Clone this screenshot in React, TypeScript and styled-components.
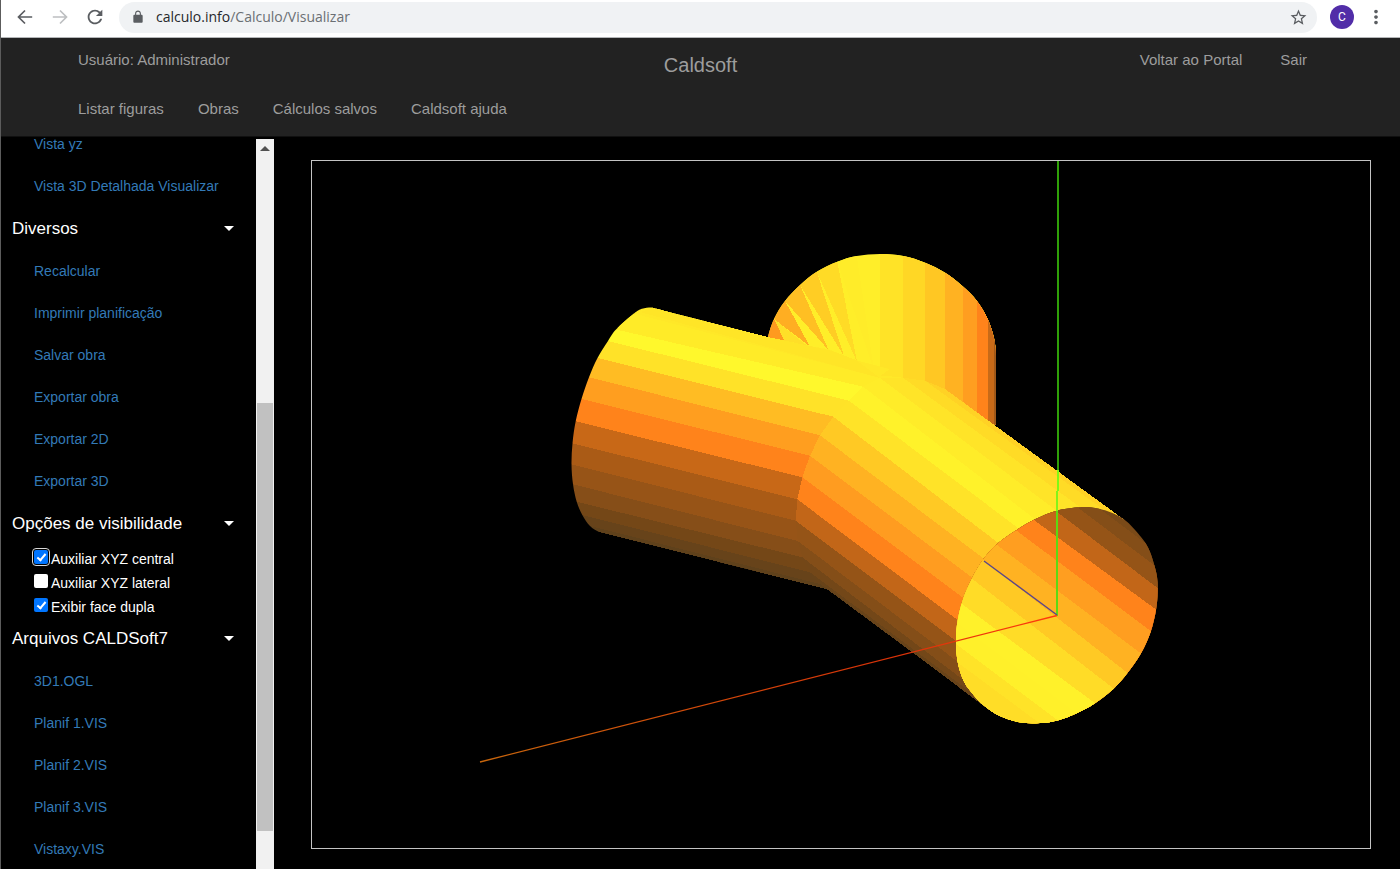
import React, { useState } from "react";
import styled, { createGlobalStyle } from "styled-components";
import { MdMoreVert, MdRefresh, MdStarBorder } from "react-icons/md";

const GlobalStyle = createGlobalStyle`
  *, *::before, *::after { box-sizing: border-box; }
  html, body { margin: 0; background: #000; }
  body { font-family: "Liberation Sans", Arial, sans-serif; }
  button { font-family: inherit; }
`;

const Page = styled.div`
  display: flex;
  flex-direction: column;
  height: 100vh;
  overflow: hidden;
  border-left: 1px solid #5c5c5c;
  background: #000;
`;

/* ---------- browser bar ---------- */

const BrowserBar = styled.div`
  display: flex;
  align-items: center;
  flex: none;
  height: 38px;
  padding: 0 13px 3px;
  background: #fff;
  border-bottom: 1px solid #b4b6b8;
`;

const ToolButton = styled.button<{ $dim?: boolean }>`
  display: flex;
  align-items: center;
  justify-content: center;
  width: 22px;
  height: 22px;
  margin-right: 13px;
  padding: 0;
  border: 0;
  background: none;
  color: ${(p) => (p.$dim ? "#bdbfc1" : "#5a5d61")};

  &:last-child {
    margin-right: 0;
  }
`;

const AddressBar = styled.div`
  display: flex;
  align-items: center;
  flex: 1;
  height: 31px;
  margin-right: 13px;
  padding: 0 8px 0 12px;
  border-radius: 16px;
  background: #f0f2f4;
  color: #5a5d61;

  ${ToolButton} {
    margin-right: 0;
  }
`;

const Address = styled.button`
  flex: 1;
  margin-left: 11px;
  padding: 0;
  border: 0;
  background: none;
  color: #6b6f73;
  font: 14px/20px "Open Sans", "Noto Sans", sans-serif;
  text-align: left;
  cursor: text;
`;

const Host = styled.span`
  color: #26282b;
`;

const Avatar = styled.button`
  width: 24px;
  height: 24px;
  margin-right: 11px;
  padding: 0;
  border: 0;
  border-radius: 50%;
  background: #512da8;
  color: #fff;
  font: 12px/24px Roboto, sans-serif;
`;

const ArrowIcon = ({ forward }: { forward?: boolean }) => (
  <svg width="22" height="22" viewBox="0 0 22 22" fill="none" stroke="currentColor" strokeWidth="1.7">
    <path d={forward ? "M3.8 11H17M11 4.5L17.5 11L11 17.5" : "M18.2 11H5M11 4.5L4.5 11L11 17.5"} />
  </svg>
);

const LockIcon = () => (
  <svg width="14" height="14" viewBox="0 0 24 24" fill="currentColor">
    <path d="M18 8h-1V6c0-2.76-2.24-5-5-5S7 3.240 7 6v2H6c-1.100 0-2 .9-2 2v10c0 1.100.9 2 2 2h12c1.100 0 2-.9 2-2V10c0-1.100-.9-2-2-2zM15.100 8H8.900V6c0-1.710 1.390-3.100 3.100-3.100s3.100 1.390 3.100 3.100v2z" />
  </svg>
);

/* ---------- site header ---------- */

const Header = styled.header`
  flex: none;
  height: 99px;
  padding: 0 77px;
  background: #222;
  border-bottom: 1px solid #101010;
`;

const HeaderRow = styled.div`
  display: grid;
  grid-template-columns: 1fr auto 1fr;
  align-items: center;
  height: 44px;
`;

const headerText = `
  color: #9d9d9d;
  font-size: 15px;
  line-height: 20px;
  text-decoration: none;
`;

const UserName = styled.span`
  ${headerText}
`;

const HeaderLink = styled.a`
  ${headerText}
`;

const Brand = styled.a`
  padding-top: 10px;
  color: #9d9d9d;
  font-size: 20px;
  line-height: 20px;
  text-decoration: none;
`;

const SessionNav = styled.nav`
  display: flex;
  justify-content: flex-end;
  gap: 38px;
  padding-right: 16px;
`;

const MainNav = styled.nav`
  display: flex;
  align-items: center;
  gap: 34px;
  height: 54px;
`;

/* ---------- sidebar ---------- */

const Body = styled.div`
  display: flex;
  flex: 1;
  min-height: 0;
`;

const Sidebar = styled.aside`
  flex: none;
  width: 255px;
  overflow: hidden;
`;

/* the menu is shown scrolled, so its first entry is partly cut off */
const Menu = styled.div`
  margin-top: -14px;
`;

const LinkList = styled.ul`
  margin: 0;
  padding: 0 0 0 33px;
  list-style: none;
  font-size: 14px;
  line-height: 42px;
`;

const MenuLink = styled.a`
  color: #337ab7;
  text-decoration: none;
`;

const SectionToggle = styled.button`
  display: flex;
  align-items: center;
  justify-content: space-between;
  width: 100%;
  height: 43px;
  padding: 0 22px 0 11px;
  border: 0;
  background: none;
  color: #fff;
  font-size: 17px;
  line-height: 24px;
  text-align: left;
`;

const Caret = styled.span`
  border: 5px solid transparent;
  border-top-color: #fff;
  border-bottom: 0;
`;

const CheckRow = styled.label`
  display: flex;
  align-items: center;
  gap: 3px;
  height: 24px;
  padding-left: 33px;
  color: #fff;
  font-size: 14px;
`;

const CheckText = styled.span`
  padding-top: 4px;
  line-height: 20px;
`;

const CheckBox = styled.input<{ $ring?: boolean }>`
  appearance: none;
  display: grid;
  place-items: center;
  width: 14px;
  height: 14px;
  margin: 0;
  border-radius: 2px;
  background: #fff;
  outline: ${(p) => (p.$ring ? "1px solid #d8d8d8" : "none")};
  outline-offset: 1px;

  &:checked {
    background: #0075ff;
  }

  &:checked::after {
    content: "";
    width: 5px;
    height: 9px;
    margin-bottom: 2px;
    border: solid #fff;
    border-width: 0 2px 2px 0;
    transform: rotate(40deg);
  }
`;

const ScrollTrack = styled.div`
  display: flex;
  flex-direction: column;
  flex: none;
  width: 18px;
  margin-top: 2px;
  background: #f1f1f1;
`;

const ScrollArrow = styled.span`
  align-self: center;
  margin: 7px 0 8px;
  border: 5px solid transparent;
  border-bottom-color: #505050;
  border-top: 0;
`;

const ScrollSpace = styled.span<{ $share: number }>`
  flex: ${(p) => p.$share} 1 0;
`;

const ScrollThumb = styled.span`
  flex: 428 1 0;
  margin: 0 1px;
  background: #c1c1c1;
`;

/* ---------- viewer ---------- */

const Viewer = styled.main`
  display: flex;
  flex: 1;
  min-width: 0;
  padding: 23px 29px 20px 37px;
`;

const Drawing = styled.svg`
  flex: 1;
  min-width: 0;
  width: 100%;
  height: 100%;
  border: 1px solid #c4c4c4;
`;

type Pt = [number, number];
const pts = (list: Pt[]) => list.map((p) => p.join(",")).join(" ");

/* closed smooth curve through all the points */
const smooth = (list: Pt[]) => {
  const n = list.length;
  const at = (i: number) => list[(i + n) % n];
  const parts = list.map((p, i) => {
    const before = at(i - 1);
    const next = at(i + 1);
    const after = at(i + 2);
    const c1 = [p[0] + (next[0] - before[0]) / 6, p[1] + (next[1] - before[1]) / 6];
    const c2 = [next[0] - (after[0] - p[0]) / 6, next[1] - (after[1] - p[1]) / 6];
    return `C${c1.join(" ")} ${c2.join(" ")} ${next.join(" ")}`;
  });
  return `M${list[0].join(" ")}${parts.join("")}Z`;
};

/* outer rim and joint of the bent tube, in the same order */
const leftRim: Pt[] = [
  [652, 307.5], [634, 313.5], [616, 329.5], [608, 341], [597.5, 358], [589, 377.3],
  [581.5, 399], [575.7, 421.3], [572.5, 443.3], [571.5, 464.3], [573, 484.3],
  [576.7, 501.7], [582.3, 515], [590, 526], [599, 532],
];
/* the same rim as a closed outline, carried far enough right to hold the tube */
const leftOutline: Pt[] = [
  [642, 308.8],
  ...leftRim.slice(1), [608, 534.5], [625, 538.8], [660, 547.5], [745, 568.8],
  [830, 590], [900, 590], [930, 480], [930, 380], [890, 369], [767, 337],
  [700, 319.8], [670, 312], [657, 308.5], [651, 307.4],
];
const joint: Pt[] = [
  [890, 369], [880, 378], [863, 386.7], [849, 400.7], [833.3, 416.7], [820, 435.3],
  [810, 455.7], [802.3, 477.3], [797.3, 499.3], [795.7, 520.7], [797.7, 541],
  [802.3, 557.3], [810, 572.3], [820, 584], [830, 590],
];
const leftColors = [
  "#ffe527", "#ffeb28", "#fff82c", "#ffe228", "#ffbc23", "#ff9e1f", "#ff831b",
  "#c86817", "#aa5b16", "#975417", "#864e18", "#744717", "#67431a", "#5f411b",
];

const frontJoint: Pt[] = [[945, 389], [925, 380.7], [903, 377.7], ...joint.slice(1)];
/* the middle of this rim runs on under the opening, so no seam shows */
const frontRim: Pt[] = [
  [1127, 521.7], [1107, 512], [1084, 510], [1060.7, 513.7], [1039, 522.3],
  [1022.3, 531.2], [1002.3, 546], [987.3, 561.3], [976.3, 580.7], [967.3, 601],
  [961.7, 623], [960, 644], [961.7, 664.7], [967.3, 683], [974, 694.7],
  [980, 702.5], [985, 707],
];
const frontColors = [
  "#ffd225", "#ffdb26", "#ffe428", "#ffec29", "#fff22a", "#ffe328", "#ffc924",
  "#ffb222", "#ff9c20", "#ff831b", "#c26618", "#955417", "#844e18", "#734718",
  "#684319", "#62411a",
];

const opening: Pt[] = [
  [1056.7, 510.7], [1080, 507.2], [1096.7, 508.3], [1113, 513.3], [1127, 521.7],
  [1141, 537], [1148.3, 548], [1153.3, 561.7], [1157, 576.7], [1157.7, 592],
  [1156, 610], [1150.7, 631.7], [1141, 653.3], [1128, 672.3], [1113.3, 689],
  [1095, 703.3], [1076.7, 713.3], [1058.3, 720.2], [1040, 723], [1020, 722.3],
  [1000, 716], [983.3, 705], [971, 691.7], [963.3, 680], [957.7, 661.7], [956, 641],
  [957.7, 620], [963.3, 598], [972.3, 577.7], [983.3, 559.3], [998.3, 543],
  [1016.7, 530], [1035, 519.3],
];
/* each inner stripe fills everything below its upper edge */
const innerEdges: [Pt, Pt, string][] = [
  [[1100, 509], [1152, 548], "#844e18"],
  [[1077, 507], [1154, 565], "#955417"],
  [[1056.7, 511.7], [1157, 587.5], "#c26618"],
  [[1033, 519.3], [1156, 609.5], "#ff831b"],
  [[1016.7, 530.7], [1150.7, 631], "#ff9e20"],
  [[998.3, 546], [1140, 652.7], "#ffb222"],
  [[983.3, 560], [1126.7, 672.3], "#ffc924"],
  [[972.3, 579], [1113.3, 688.3], "#ffdc27"],
  [[963.3, 605], [1095, 703.3], "#fff12a"],
  [[956, 622], [1076.7, 713.3], "#fff02a"],
  [[956, 644], [1058.3, 720.7], "#ffe328"],
  [[957, 662], [1043.3, 726], "#ffdd27"],
];

const below = ([x1, y1]: Pt, [x2, y2]: Pt): Pt[] => {
  const slope = (y2 - y1) / (x2 - x1);
  return [
    [900, y1 - slope * (x1 - 900)],
    [1200, y2 + slope * (1200 - x2)],
    [1200, 800],
    [900, 800],
  ];
};

const branchOutline: Pt[] = [
  [768, 337], [774, 319], [785, 301], [800, 285], [816.7, 271.7], [837.3, 261.7],
  [856.7, 256], [880, 254], [903.3, 256], [925, 262.7], [945, 272.7], [962.3, 286],
  [976.7, 300.7], [987.3, 318.3], [994, 338.3], [996, 356.7], [996, 375],
  [996, 395], [996, 415], [990, 424], [900, 400], [768, 345],
];
const branchStripes: [number, string][] = [
  [880, "#ffe327"], [903.3, "#ffd725"], [925, "#ffc723"], [945, "#ffb222"],
  [963, "#ff9e20"], [977.3, "#ff831b"], [988, "#c86a18"], [994.3, "#a05818"],
];
const wedges: [Pt[], string][] = [
  [[[760, 340], [774, 319], [787, 342]], "#ff9a1f"],
  [[[774, 319], [810, 348], [787, 346]], "#ffdf28"],
  [[[774, 319], [779, 300], [785, 301], [810, 346.5]], "#ffae22"],
  [[[785, 301], [790, 285], [800, 285], [828.5, 350]], "#ffbf23"],
  [[[800, 285], [806, 270], [816.7, 271.7], [844, 356]], "#ffcd24"],
  [[[816.7, 271.7], [825, 260], [837.3, 261.7], [857, 362]], "#ffdb26"],
  [[[837.3, 261.7], [845, 250], [856.7, 256], [874, 370]], "#ffec29"],
];

/* stripes start a little outside the rim, which the clip then trims */
const outward = ([x, y]: Pt, [jx, jy]: Pt): Pt => [x - 12, y - (12 * (jy - y)) / (jx - x)];

const Stripes = ({ from, to, colors }: { from: Pt[]; to: Pt[]; colors: string[] }) => (
  <>
    {colors.map((color, i) => (
      <polygon key={i} fill={color} points={pts([from[i], to[i], to[i + 1], from[i + 1]])} />
    ))}
  </>
);

const TubeDrawing = () => (
  <Drawing viewBox="312 161 1058 687" role="img" aria-label="Vista 3D da figura">
    <defs>
      <clipPath id="branch">
        <path d={smooth(branchOutline)} />
      </clipPath>
      <clipPath id="leftTube">
        <path d={smooth(leftOutline)} />
      </clipPath>
      <clipPath id="opening">
        <path d={smooth(opening)} />
      </clipPath>
      <linearGradient id="axisX" x1="480" x2="1057" y1="762" y2="616" gradientUnits="userSpaceOnUse">
        <stop offset="0" stopColor="#c8660c" />
        <stop offset="0.7" stopColor="#d83208" />
        <stop offset="1" stopColor="#ff3a0c" />
      </linearGradient>
    </defs>

    <g shapeRendering="crispEdges">
      <polygon fill="#a05818" points="993,380 996,380 996,425 993,425" />
      <polygon fill="#c86a18" points="985,380 994,380 994,425 985,420" />
      <g clipPath="url(#branch)">
        <rect x="760" y="250" width="236" height="180" fill="#ffee29" />
        {branchStripes.map(([x, color]) => (
          <rect key={x} x={x} y="250" width={996 - x} height="180" fill={color} />
        ))}
        {wedges.map(([shape, color], i) => (
          <polygon key={i} points={pts(shape)} fill={color} />
        ))}
      </g>
      <polygon
        fill="#ffe828"
        points="652,308 768,337 810,346 828,349 843,355 856,360 880,376 903,377 863,388 640,320"
      />
      <g clipPath="url(#leftTube)">
        <polygon fill="#ffe828" points="600,294 768,337 890,369 863,388 600,324" />
        <Stripes
          from={leftRim.map((p, i) => outward(p, joint[i])).slice(1)}
          to={joint.slice(1)}
          colors={leftColors.slice(1)}
        />
      </g>
      <polygon fill="#ffe527" points="652,308 640,312 880,378 856,360 843,355 828,350 768,337" />
      <Stripes from={frontJoint} to={frontRim} colors={frontColors} />
      <g clipPath="url(#opening)">
        <rect x="950" y="500" width="215" height="230" fill="#7a4a18" />
        {innerEdges.map(([a, b, color], i) => (
          <polygon key={i} points={pts(below(a, b))} fill={color} />
        ))}
      </g>
      <rect x="1057" y="161" width="2" height="309" fill="#2fa008" />
      <rect x="1057" y="470" width="2" height="21" fill="#7dfa14" />
      <rect x="1056" y="491" width="2" height="20" fill="#84f318" />
      <rect x="1056" y="511" width="2" height="105" fill="#5cda12" />
    </g>
    <line x1="984" y1="561" x2="1057" y2="615" stroke="#5a4689" strokeWidth="1.4" />
    <line x1="480" y1="762" x2="1057" y2="615.5" stroke="url(#axisX)" strokeWidth="1.3" />
  </Drawing>
);

/* ---------- content ---------- */

const viewLinks = ["Vista yz", "Vista 3D Detalhada Visualizar"];
const actionLinks = [
  "Recalcular",
  "Imprimir planificação",
  "Salvar obra",
  "Exportar obra",
  "Exportar 2D",
  "Exportar 3D",
];
const fileLinks = ["3D1.OGL", "Planif 1.VIS", "Planif 2.VIS", "Planif 3.VIS", "Vistaxy.VIS"];
const mainLinks = ["Listar figuras", "Obras", "Cálculos salvos", "Caldsoft ajuda"];

const Links = ({ items }: { items: string[] }) => (
  <LinkList>
    {items.map((item) => (
      <li key={item}>
        <MenuLink href="#">{item}</MenuLink>
      </li>
    ))}
  </LinkList>
);

const Section = ({ title, children }: { title: string; children: React.ReactNode }) => {
  const [open, setOpen] = useState(true);
  return (
    <section>
      <SectionToggle type="button" aria-expanded={open} onClick={() => setOpen(!open)}>
        {title}
        <Caret />
      </SectionToggle>
      {open && children}
    </section>
  );
};

const Option = ({ label, checked, ring }: { label: string; checked?: boolean; ring?: boolean }) => (
  <CheckRow>
    <CheckBox type="checkbox" defaultChecked={checked} $ring={ring} />
    <CheckText>{label}</CheckText>
  </CheckRow>
);

export default function App() {
  return (
    <Page>
      <GlobalStyle />
      <BrowserBar>
        <ToolButton type="button" aria-label="Voltar">
          <ArrowIcon />
        </ToolButton>
        <ToolButton type="button" aria-label="Avançar" $dim>
          <ArrowIcon forward />
        </ToolButton>
        <ToolButton type="button" aria-label="Recarregar">
          <MdRefresh size={22} />
        </ToolButton>
        <AddressBar>
          <LockIcon />
          <Address type="button">
            <Host>calculo.info</Host>/Calculo/Visualizar
          </Address>
          <ToolButton type="button" aria-label="Favoritar">
            <MdStarBorder size={19} />
          </ToolButton>
        </AddressBar>
        <Avatar type="button">C</Avatar>
        <ToolButton type="button" aria-label="Menu">
          <MdMoreVert size={22} />
        </ToolButton>
      </BrowserBar>

      <Header>
        <HeaderRow>
          <UserName>Usuário: Administrador</UserName>
          <Brand href="#">Caldsoft</Brand>
          <SessionNav>
            <HeaderLink href="#">Voltar ao Portal</HeaderLink>
            <HeaderLink href="#">Sair</HeaderLink>
          </SessionNav>
        </HeaderRow>
        <MainNav>
          {mainLinks.map((item) => (
            <HeaderLink key={item} href="#">
              {item}
            </HeaderLink>
          ))}
        </MainNav>
      </Header>

      <Body>
        <Sidebar>
          <Menu>
            <Links items={viewLinks} />
            <Section title="Diversos">
              <Links items={actionLinks} />
            </Section>
            <Section title="Opções de visibilidade">
              <Option label="Auxiliar XYZ central" checked ring />
              <Option label="Auxiliar XYZ lateral" />
              <Option label="Exibir face dupla" checked />
            </Section>
            <Section title="Arquivos CALDSoft7">
              <Links items={fileLinks} />
            </Section>
          </Menu>
        </Sidebar>
        <ScrollTrack aria-hidden="true">
          <ScrollArrow />
          <ScrollSpace $share={244} />
          <ScrollThumb />
          <ScrollSpace $share={38} />
        </ScrollTrack>
        <Viewer>
          <TubeDrawing />
        </Viewer>
      </Body>
    </Page>
  );
}
